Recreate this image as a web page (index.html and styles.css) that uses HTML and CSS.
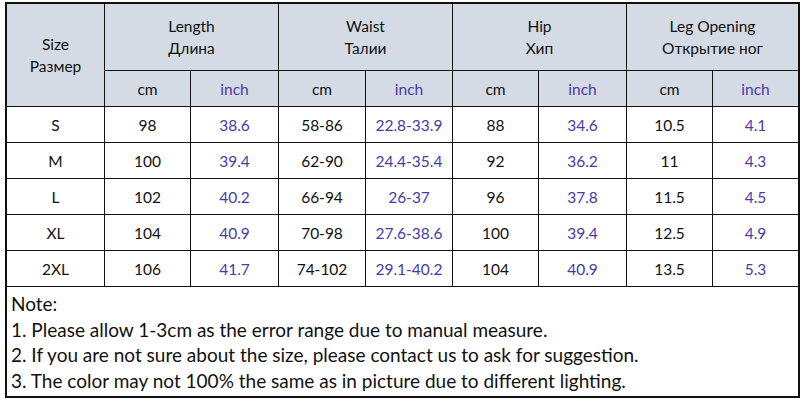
FILE: index.html
```html
<!DOCTYPE html>
<html lang="ru">
<head>
  <meta charset="UTF-8">
  <title>Size chart</title>
  <link rel="stylesheet" href="styles.css">
</head>
<body>

  <div class="chart">
    <div class="cell head size-head">Size<br>Размер</div>
    <div class="cell head group">Length<br>Длина</div>
    <div class="cell head group">Waist<br>Талии</div>
    <div class="cell head group">Hip<br>Хип</div>
    <div class="cell head group">Leg Opening<br>Открытие ног</div>

    <div class="cell head">cm</div><div class="cell head inch">inch</div>
    <div class="cell head">cm</div><div class="cell head inch">inch</div>
    <div class="cell head">cm</div><div class="cell head inch">inch</div>
    <div class="cell head">cm</div><div class="cell head inch">inch</div>

    <div class="cell">S</div>
    <div class="cell">98</div><div class="cell inch">38.6</div>
    <div class="cell">58-86</div><div class="cell inch">22.8-33.9</div>
    <div class="cell">88</div><div class="cell inch">34.6</div>
    <div class="cell">10.5</div><div class="cell inch">4.1</div>

    <div class="cell">M</div>
    <div class="cell">100</div><div class="cell inch">39.4</div>
    <div class="cell">62-90</div><div class="cell inch">24.4-35.4</div>
    <div class="cell">92</div><div class="cell inch">36.2</div>
    <div class="cell">11</div><div class="cell inch">4.3</div>

    <div class="cell">L</div>
    <div class="cell">102</div><div class="cell inch">40.2</div>
    <div class="cell">66-94</div><div class="cell inch">26-37</div>
    <div class="cell">96</div><div class="cell inch">37.8</div>
    <div class="cell">11.5</div><div class="cell inch">4.5</div>

    <div class="cell">XL</div>
    <div class="cell">104</div><div class="cell inch">40.9</div>
    <div class="cell">70-98</div><div class="cell inch">27.6-38.6</div>
    <div class="cell">100</div><div class="cell inch">39.4</div>
    <div class="cell">12.5</div><div class="cell inch">4.9</div>

    <div class="cell">2XL</div>
    <div class="cell">106</div><div class="cell inch">41.7</div>
    <div class="cell">74-102</div><div class="cell inch">29.1-40.2</div>
    <div class="cell">104</div><div class="cell inch">40.9</div>
    <div class="cell">13.5</div><div class="cell inch">5.3</div>

    <div class="note">
      <p>Note:</p>
      <p>1. Please allow 1-3cm as the error range due to manual measure.</p>
      <p>2. If you are not sure about the size, please contact us to ask for suggestion.</p>
      <p>3. The color may not 100% the same as in picture due to different lighting.</p>
    </div>
  </div>

</body>
</html>
```

FILE: styles.css
```css
body {
  margin: 0;
  padding: 0;
  background-color: white;
  font-family: Lato, 'Noto Sans', sans-serif;
  color: #111;
}

.chart {
  display: grid;
  grid-template-columns: 97px 85px 87px 86px 86px 85px 87px 85px 85px;
  grid-template-rows: 66px 35px 35px 35px 35px 35px 35px 109px;
  gap: 1px;
  width: 791px;
  margin: 2px 0 0 5px;
  padding: 1px;
  border: 1px solid #111;
  background-color: #111;
}

.cell {
  display: flex;
  align-items: center;
  justify-content: center;
  text-align: center;
  background-color: white;
  font-size: 15.5px;
  line-height: 22px;
}

.head {
  background-color: #d4dbe5;
}

.size-head {
  grid-row: span 2;
}

.group {
  grid-column: span 2;
}

.inch {
  color: #4b39a8;
}

.note {
  grid-column: 1 / -1;
  background-color: white;
  padding: 4px 0 0 4px;
  font-size: 19px;
  line-height: 25.5px;
}

.note p {
  margin: 0;
}
```
